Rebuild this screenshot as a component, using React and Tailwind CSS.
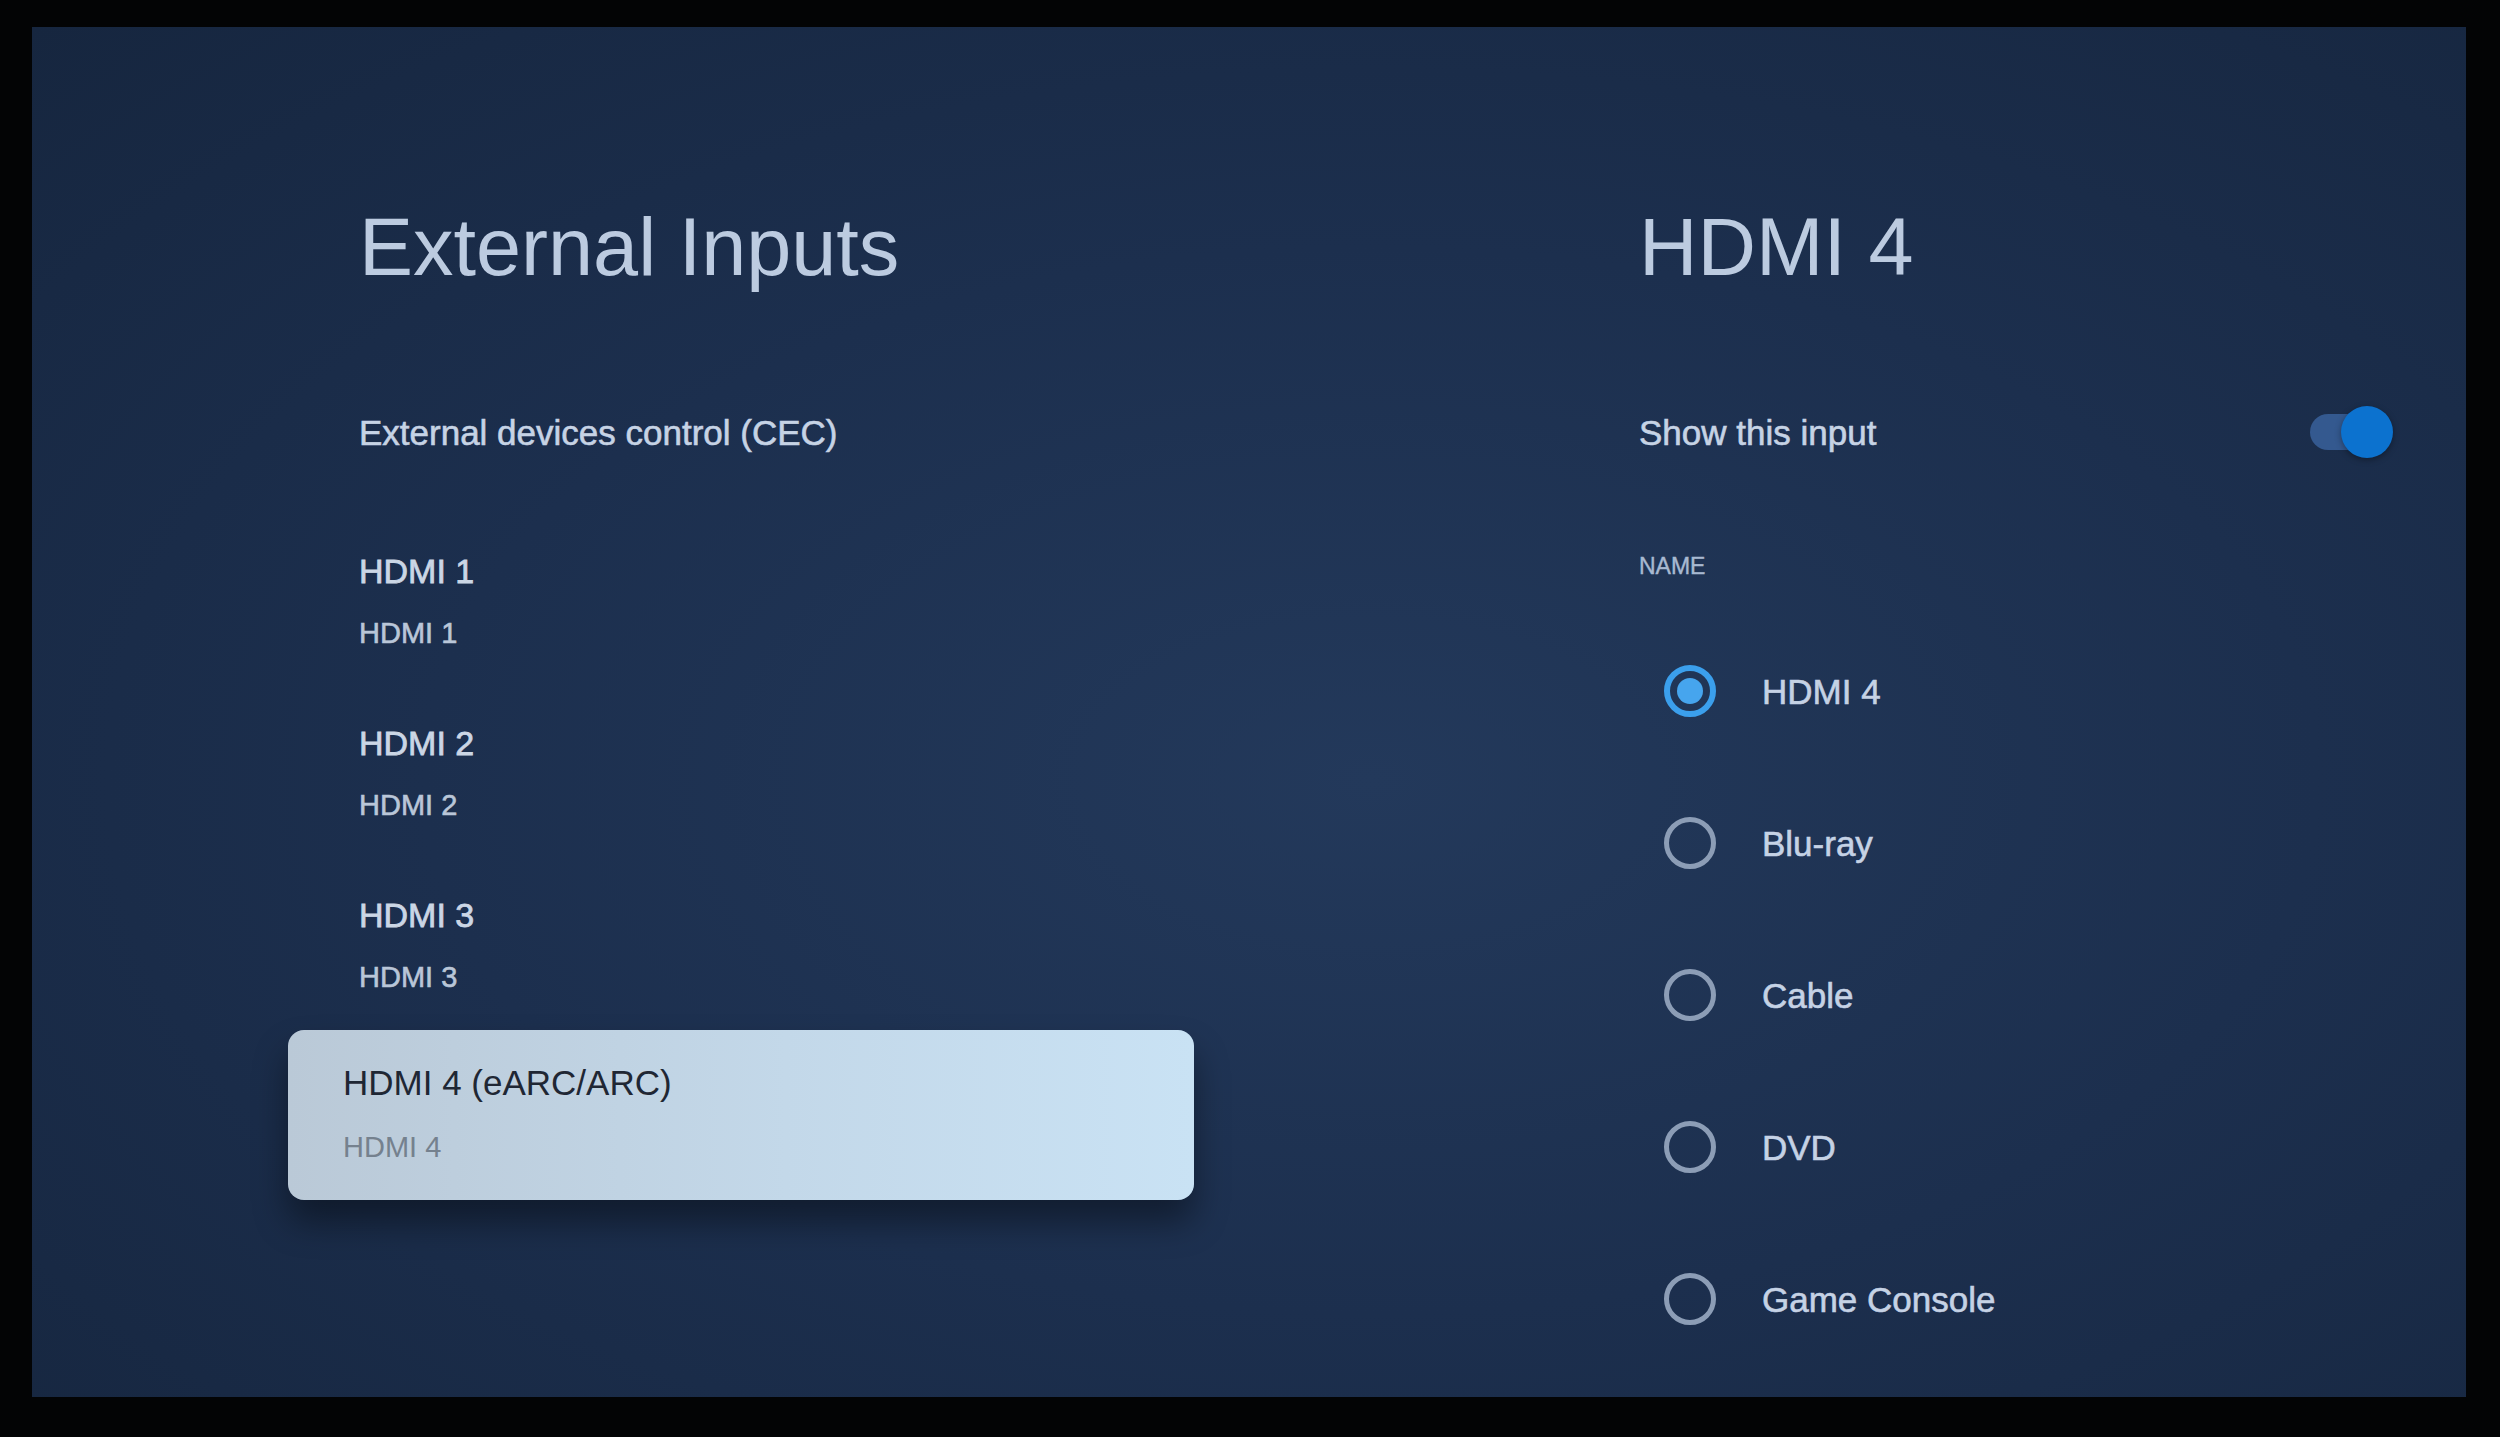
const FONT = "font-['Liberation_Sans',Arial,sans-serif]";

const inputs = [
  { title: 'HDMI 1', sub: 'HDMI 1' },
  { title: 'HDMI 2', sub: 'HDMI 2' },
  { title: 'HDMI 3', sub: 'HDMI 3' },
];

const names = ['HDMI 4', 'Blu-ray', 'Cable', 'DVD', 'Game Console'];

function Radio({ checked }) {
  if (checked) {
    return (
      <div className="w-[52px] h-[52px] rounded-full border-[6px] border-[#3b9fec] flex items-center justify-center shrink-0">
        <div className="w-[26px] h-[26px] rounded-full bg-[#46a5ee]" />
      </div>
    );
  }
  return <div className="w-[52px] h-[52px] rounded-full border-[5px] border-[#8c9db6] shrink-0" />;
}

function Toggle() {
  return (
    <div className="relative w-[83px] h-[52px]">
      <div className="absolute left-0 top-[8px] w-[70px] h-[36px] rounded-full bg-[#34598f]" />
      <div className="absolute right-0 top-0 w-[52px] h-[52px] rounded-full bg-[#0c72cf] shadow-[0_2px_6px_rgba(0,0,0,0.35)]" />
    </div>
  );
}

export default function App() {
  return (
    <div className={`w-[2500px] h-[1437px] bg-[#030405] pt-[27px] pl-[32px] ${FONT}`}>
      <div className="w-[2434px] h-[1370px] flex pl-[327px] pt-[170px] bg-[radial-gradient(ellipse_at_55%_55%,#23395b_0%,#1c2f4e_50%,#16263f_100%)]">
        {/* Left column: input list */}
        <div className="w-[835px] flex flex-col">
          <div className="h-[100px] flex items-center text-[81px] leading-none text-[#bccbe0]">
            External Inputs
          </div>
          <div className="mt-[105px] h-[60px] flex items-center text-[35px] leading-none text-[#c6d3e5] [-webkit-text-stroke:0.6px_#c6d3e5]">
            External devices control (CEC)
          </div>
          <div className="mt-[52px] flex flex-col">
            {inputs.map((item) => (
              <div key={item.title} className="h-[172px] pt-[37px] flex flex-col">
                <div className="h-[40px] flex items-center text-[34px] leading-none text-[#cbd6e5] [-webkit-text-stroke:0.8px_#cbd6e5]">{item.title}</div>
                <div className="mt-[22px] h-[40px] flex items-center text-[29px] leading-none text-[#b9c6d8] [-webkit-text-stroke:0.6px_#b9c6d8]">{item.sub}</div>
              </div>
            ))}
            <div className="-ml-[71px] w-[906px] h-[170px] rounded-[16px] px-[55px] pt-[32px] flex flex-col bg-[linear-gradient(90deg,#bac9d7_0%,#c3d8e9_55%,#c9e2f4_100%)] shadow-[0_22px_34px_rgba(0,0,0,0.4)]">
              <div className="h-[40px] flex items-center text-[35px] leading-none text-[#1f2734]">HDMI 4 (eARC/ARC)</div>
              <div className="mt-[25px] h-[40px] flex items-center text-[29px] leading-none text-[#75818e]">HDMI 4</div>
            </div>
          </div>
        </div>

        {/* Right column: input details */}
        <div className="ml-[445px] w-[754px] flex flex-col">
          <div className="h-[100px] flex items-center text-[81px] leading-none text-[#bccbe0]">HDMI 4</div>
          <div className="mt-[105px] h-[60px] flex items-center justify-between">
            <span className="text-[35px] leading-none text-[#c6d3e5] [-webkit-text-stroke:0.6px_#c6d3e5]">Show this input</span>
            <Toggle />
          </div>
          <div className="mt-[84px] h-[40px] flex items-center text-[23px] leading-none text-[#a8b9d1] [-webkit-text-stroke:0.4px_#a8b9d1]">NAME</div>
          <div className="mt-[29px] flex flex-col">
            {names.map((name, i) => (
              <div key={name} className="h-[152px] flex items-center pl-[25px] gap-[46px]">
                <Radio checked={i === 0} />
                <span className="text-[35px] leading-none text-[#c5d2e5] [-webkit-text-stroke:0.6px_#c5d2e5]">{name}</span>
              </div>
            ))}
          </div>
        </div>
      </div>
    </div>
  );
}
